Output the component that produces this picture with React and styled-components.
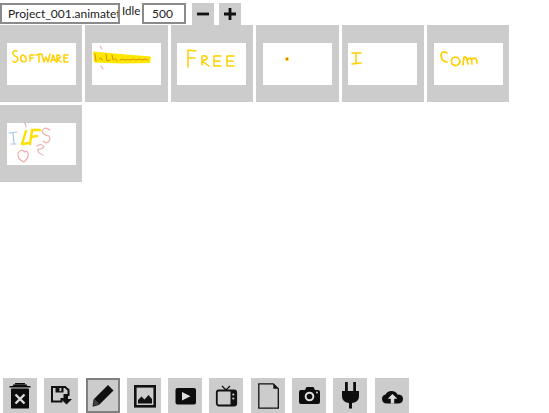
import React from "react";
import styled, { createGlobalStyle } from "styled-components";

const GlobalStyle = createGlobalStyle`
  html, body {
    margin: 0;
    padding: 0;
    background: #fff;
    font-family: Lato, "Open Sans", sans-serif;
    overflow: hidden;
  }
`;

const Page = styled.div`
  width: 549px;
  height: 413px;
  display: flex;
  flex-direction: column;
`;

const Header = styled.div`
  height: 25px;
  display: flex;
  align-items: flex-start;
  padding-top: 3px;
  box-sizing: border-box;
`;

const TextBox = styled.div`
  box-sizing: border-box;
  width: ${(p) => p.$width}px;
  height: 21px;
  border: 2px solid #8a8a8a;
  background: #fff;
  color: #222;
  font-size: 12px;
  line-height: 17px;
  padding-left: ${(p) => p.$pad}px;
  white-space: nowrap;
  overflow: hidden;
`;

const Label = styled.span`
  width: 22px;
  padding-left: 2px;
  box-sizing: border-box;
  font-size: 11.5px;
  line-height: 15px;
  color: #222;
`;

const StepButton = styled.div`
  width: 22px;
  height: 22px;
  margin-left: ${(p) => p.$gap}px;
  background: #ccc;
  display: flex;
  align-items: center;
  justify-content: center;
`;

const Frames = styled.div`
  display: flex;
  flex-wrap: wrap;
  gap: 3px;
  flex: 1;
  align-content: flex-start;
`;

const Frame = styled.div`
  width: 82.4px;
  height: 77px;
  background: #ccc;
  display: flex;
  align-items: center;
  justify-content: center;
  padding-top: 1px;
  box-sizing: border-box;
`;

const Thumb = styled.svg`
  width: 69px;
  height: 42px;
  background: #fff;
  display: block;
  overflow: visible;
`;

const Toolbar = styled.div`
  height: 35px;
  display: flex;
  gap: 7.3px;
  padding-left: 3px;
`;

const ToolButton = styled.div`
  box-sizing: border-box;
  width: 34px;
  height: 35px;
  background: #ccc;
  border: ${(p) => (p.$active ? "2px solid #808080" : "none")};
  position: relative;
`;

const ToolIcon = styled.svg`
  position: absolute;
  left: ${(p) => (p.$active ? -2 : 0)}px;
  top: ${(p) => (p.$active ? -2 : 0)}px;
  width: 34px;
  height: 35px;
`;

const Ink = ({ d, color = "#ffd000", w = 1.5, o = 1 }) => (
  <path d={d} fill="none" stroke={color} strokeWidth={w} strokeOpacity={o} strokeLinecap="round" strokeLinejoin="round" />
);

const doodles = [
  <>
    <Ink d="M10 8 Q5 7 6 11 Q7 13 10 14 Q12 17 9 19 Q7 20 6 18" />
    <Ink d="M16 12 Q13 13 14 17 Q16 20 19 18 Q20 14 16 12" />
    <Ink d="M23 18 L23 12 L27 12 M23 15 L26 15" />
    <Ink d="M29 12 L35 11 M32 11 L32 19" />
    <Ink d="M35 12 L37 19 L39 14 L41 19 L43 11" />
    <Ink d="M44 19 L46 12 L49 19 M45 17 L48 17" />
    <Ink d="M50 19 L50 12 Q54 12 53 15 L50 16 L54 19" />
    <Ink d="M61 12 L57 12 L57 19 L61 19 M57 15 L60 15" />
  </>,
  <>
    <path d="M1 8.500 L28 11 L59 13.500 L58 20 L30 20.500 L2 19.500 Z" fill="#ffe600" />
    <Ink d="M3 11 L4 18 M7 16 Q9 13 10 17 M14 11 L15 18 L18 17 M20 12 L21 17 Q24 14 25 18 M28 17 Q31 15 33 17 Q36 16 38 17 Q42 15 44 17 Q48 15 50 17 Q53 15 56 17" color="#d89000" w={1} />
    <Ink d="M8 3 L10 6 M9 23 L11 26" color="#f0a8a8" w={1.1} />
  </>,
  <>
    <Ink d="M19 8 L11 7 L11 24 M11 15 L18 15" />
    <Ink d="M25 22 L25 13 Q31 12 30 16 L25 18 L32 23" />
    <Ink d="M44 13 L37 13 L37 23 L44 23 M37 18 L43 18" />
    <Ink d="M57 13 L50 13 L50 23 L57 23 M50 18 L56 18" />
  </>,
  <>
    <circle cx="24" cy="16" r="1.9" fill="#ffd000" />
    <circle cx="24" cy="16" r="0.9" fill="#d05000" />
  </>,
  <>
    <Ink d="M4 10 L13 10 M8 10 L8 20 M4 21 L13 20" />
  </>,
  <>
    <Ink d="M13 10 Q8 7 7 12 Q7 18 13 19" w={1.7} />
    <Ink d="M21 14 Q16 15 18 21 Q23 25 26 19 Q25 14 21 14" w={1.7} />
    <Ink d="M29 22 L30 14 Q33 13 34 21 M34 16 Q38 13 38 21 M38 16 Q43 13 43 20" w={1.7} />
  </>,
  <>
    <Ink d="M2 10 L10 9 M6 10 L7 20 M4 21 L9 21" color="#a8c4ec" w={1.2} />
    <Ink d="M19 8 L15 21 L22 20" color="#ffe000" w={2.4} />
    <Ink d="M25 7 L33 7 M25 7 L23 21 M24 14 L30 13" color="#ffe000" w={2.4} />
    <Ink d="M43 7 Q37 3 35 8 Q36 12 42 13 Q45 18 39 20 L36 18" color="#eeb0b0" w={1.2} />
    <Ink d="M18 29 Q14 25 11 30 Q10 36 17 39 Q22 35 21 30 Q20 27 18 29" color="#eeb0b0" w={1.2} />
    <Ink d="M30 23 Q35 20 37 24 Q34 27 31 26 Q30 30 36 32" color="#eeb0b0" w={1.2} />
    <Ink d="M18 0 L19 4" color="#eeb0b0" w={1.2} />
  </>,
];

const icons = [
  {
    id: "delete",
    body: (
      <>
        <path d="M6.500 8h21v1.600h-21zM12 5h10v1.500H12z" fill="#0d0d0d" />
        <path d="M10 6.500h14V8H10z" fill="#0d0d0d" />
        <rect x="8" y="10.500" width="18" height="20" rx="0.6" fill="#0d0d0d" />
        <path d="M12.500 16.500l9 9M21.500 16.500l-9 9" stroke="#ddd" strokeWidth="2.400" />
      </>
    ),
  },
  {
    id: "save",
    body: (
      <>
        <path d="M8 9h13l3.500 3v5h-4v4h-3v2.500H8z" fill="none" stroke="#111" strokeWidth="2" />
        <rect x="11.500" y="9" width="8" height="5.500" fill="#111" />
        <rect x="15.500" y="10" width="1.800" height="3.200" fill="#ccc" />
        <path d="M21 17h3v4h4l-5.500 5.500L17 21h4z" fill="#111" />
      </>
    ),
  },
  {
    id: "draw",
    active: true,
    body: (
      <>
        <path d="M22 7l5.500 5.500-14 14-5.500-5.500z" fill="#111" />
        <path d="M8 21.500l5 5-6 1.700z" fill="#444" stroke="#111" strokeWidth="0.8" />
      </>
    ),
  },
  {
    id: "image",
    body: (
      <>
        <rect x="8.300" y="8.300" width="19.400" height="20" fill="none" stroke="#111" strokeWidth="2.600" />
        <path d="M11 25.500v-3.500l3.500-3.500 3 3 4-4.500 3.500 4v4.500z" fill="#111" />
      </>
    ),
  },
  {
    id: "play",
    body: (
      <>
        <rect x="7.500" y="10" width="20.500" height="16.500" rx="2" fill="#0d0d0d" />
        <path d="M14 14v8.500l8.500-4.200z" fill="#ddd" />
      </>
    ),
  },
  {
    id: "tv",
    body: (
      <>
        <path d="M13 8l4 4 4-4" fill="none" stroke="#111" strokeWidth="1.300" />
        <rect x="7.800" y="12.500" width="19.400" height="15" rx="2" fill="none" stroke="#111" strokeWidth="1.800" />
        <rect x="21.500" y="13" width="5.500" height="14" fill="#111" />
        <circle cx="24.300" cy="16.500" r="1.100" fill="#ccc" />
        <circle cx="24.300" cy="20.500" r="1.100" fill="#ccc" />
      </>
    ),
  },
  {
    id: "new",
    body: (
      <>
        <path d="M7.800 5.800h14.500l5 5v19.400H7.800z" fill="none" stroke="#111" strokeWidth="1.300" />
        <path d="M22.300 5.800v5h5z" fill="#111" />
      </>
    ),
  },
  {
    id: "camera",
    body: (
      <>
        <path d="M7 14q0-2 2-2h4l1.500-3h7l1.500 3h3q2 0 2 2v10q0 2-2 2H9q-2 0-2-2z" fill="#0d0d0d" />
        <circle cx="17.500" cy="18.500" r="4.800" fill="#ddd" />
        <circle cx="17.500" cy="18.500" r="2.800" fill="#0d0d0d" />
        <circle cx="25" cy="14.500" r="0.900" fill="#ddd" />
      </>
    ),
  },
  {
    id: "plug",
    body: (
      <>
        <rect x="12" y="4" width="2.800" height="9" fill="#0d0d0d" />
        <rect x="20.200" y="4" width="2.800" height="9" fill="#0d0d0d" />
        <path d="M9 13h17v5q0 6-7 7v5.500h-3V25q-7-1-7-7z" fill="#0d0d0d" />
      </>
    ),
  },
  {
    id: "upload",
    body: (
      <>
        <path d="M12 25.500q-5 0-5-4.700 0-3.500 3.700-4.300Q12 13 16.500 13q4.500 0 6 3.500 5.500 0 5.500 4.300 0 4.700-5 4.700z" fill="#0d0d0d" />
        <path d="M17.500 16l4.800 4.800h-3.100v4.700h-3.400v-4.700h-3.100z" fill="#ddd" />
      </>
    ),
  },
];

export default function App() {
  return (
    <Page>
      <GlobalStyle />
      <Header>
        <TextBox $width={120} $pad={6}>Project_001.animatethis</TextBox>
        <Label>Idle</Label>
        <TextBox $width={44} $pad={8}>500</TextBox>
        <StepButton $gap={6}>
          <svg width="14" height="14" viewBox="0 0 14 14">
            <rect x="1" y="5.600" width="12" height="2.800" fill="#111" />
          </svg>
        </StepButton>
        <StepButton $gap={5}>
          <svg width="14" height="14" viewBox="0 0 14 14">
            <path d="M1 5.600h4.600V1h2.800v4.600H13v2.800H8.400V13H5.600V8.400H1z" fill="#111" />
          </svg>
        </StepButton>
      </Header>
      <Frames>
        {doodles.map((doodle, i) => (
          <Frame key={i}>
            <Thumb viewBox="0 0 69 42">{doodle}</Thumb>
          </Frame>
        ))}
      </Frames>
      <Toolbar>
        {icons.map((icon) => (
          <ToolButton key={icon.id} $active={icon.active}>
            <ToolIcon viewBox="0 0 34 35" $active={icon.active}>{icon.body}</ToolIcon>
          </ToolButton>
        ))}
      </Toolbar>
    </Page>
  );
}
